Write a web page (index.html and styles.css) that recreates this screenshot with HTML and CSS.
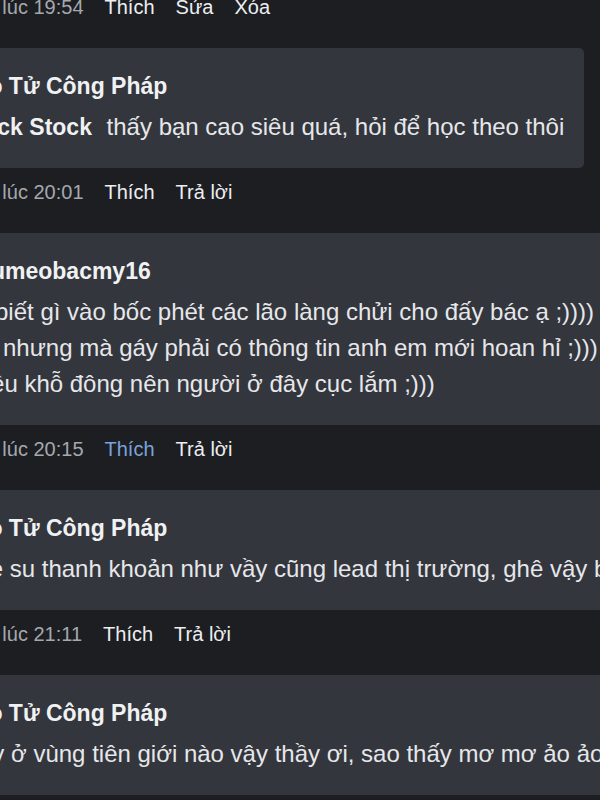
FILE: index.html
```html
<!DOCTYPE html>
<html lang="vi">
<head>
<meta charset="utf-8">
<title>Bình luận</title>
<link rel="stylesheet" href="styles.css">
</head>
<body>
<div class="thread">
  <div class="meta meta-first">
    <span class="time">Qua lúc 19:54</span>
    <span class="act">Thích</span>
    <span class="act">Sửa</span>
    <span class="act">Xóa</span>
  </div>

  <div class="comment">
    <div class="bubble">
      <div class="name">Đạo Tử Công Pháp</div>
      <div class="text"><span class="mention">Quick Stock</span> thấy bạn cao siêu quá, hỏi để học theo thôi</div>
    </div>
    <div class="meta">
      <span class="time">Qua lúc 20:01</span>
      <span class="act">Thích</span>
      <span class="act">Trả lời</span>
    </div>
  </div>

  <div class="comment">
    <div class="bubble">
      <div class="name">Maumeobacmy16</div>
      <div class="text">Ko biết gì vào bốc phét các lão làng chửi cho đấy bác ạ ;)))) cứ</div>
      <div class="text">vui, nhưng mà gáy phải có thông tin anh em mới hoan hỉ ;)))</div>
      <div class="text">nhiều khỗ đông nên người ở đây cục lắm ;)))</div>
    </div>
    <div class="meta">
      <span class="time">Qua lúc 20:15</span>
      <span class="act liked">Thích</span>
      <span class="act">Trả lời</span>
    </div>
  </div>

  <div class="comment">
    <div class="bubble">
      <div class="name">Đạo Tử Công Pháp</div>
      <div class="text">Nhe su thanh khoản như vầy cũng lead thị trường, ghê vậy bác</div>
    </div>
    <div class="meta">
      <span class="time">Qua lúc 21:11</span>
      <span class="act">Thích</span>
      <span class="act">Trả lời</span>
    </div>
  </div>

  <div class="comment">
    <div class="bubble">
      <div class="name">Đạo Tử Công Pháp</div>
      <div class="text">Mày ở vùng tiên giới nào vậy thầy ơi, sao thấy mơ mơ ảo ảo</div>
    </div>
    <div class="meta">
      <span class="time">Qua lúc 21:20</span>
      <span class="act">Thích</span>
      <span class="act">Trả lời</span>
    </div>
  </div>
</div>
</body>
</html>
```

FILE: styles.css
```css
html, body {
  margin: 0;
  padding: 0;
  width: 600px;
  height: 800px;
  overflow: hidden;
  background: #1c1e22;
}

body {
  font-family: "Liberation Sans", Arial, sans-serif;
  color: #e6e7ea;
}

.thread {
  display: flex;
  flex-direction: column;
  align-items: flex-start;
  margin: -8px 0 0 -60px;
}

.comment {
  display: flex;
  flex-direction: column;
  align-items: flex-start;
}

.bubble {
  background: #33363c;
  border-radius: 5px;
  padding: 22px 20px 23px 19px;
  white-space: nowrap;
}

.name {
  font-weight: bold;
  font-size: 23px;
  line-height: 33px;
  color: #f0f1f3;
}

.text {
  font-size: 24px;
  line-height: 36px;
}

.name + .text {
  margin-top: 6px;
}

.mention {
  font-weight: bold;
  font-size: 23px;
  margin-right: 8px;
  color: #f0f1f3;
}

.meta {
  display: flex;
  gap: 21px;
  font-size: 20px;
  line-height: 30px;
  margin: 9px 0 26px;
  padding-left: 19px;
  white-space: nowrap;
}

.meta-first {
  margin-top: 0;
}

.time {
  color: #a5a8ae;
}

.act {
  color: #eceef1;
}

.act.liked {
  color: #7aa3dc;
}
```
